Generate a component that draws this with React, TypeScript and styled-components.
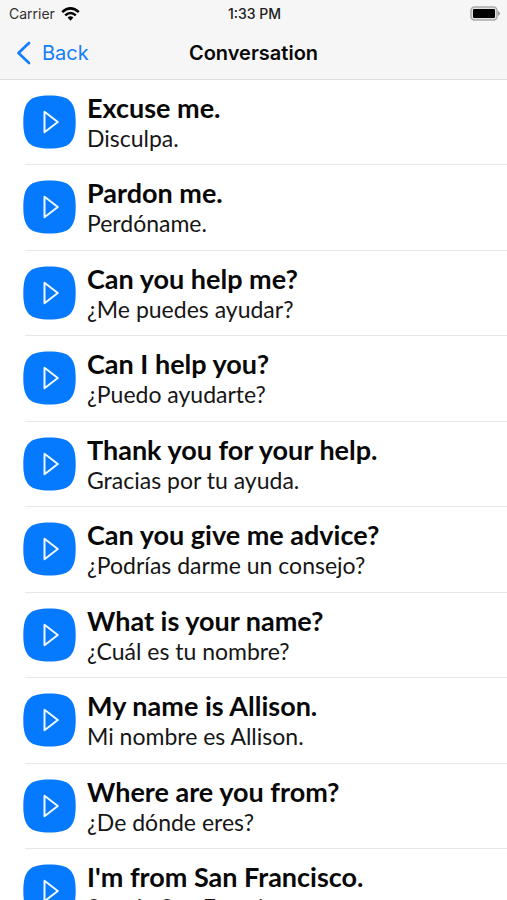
import React from "react";
import styled, { createGlobalStyle } from "styled-components";

const GlobalStyle = createGlobalStyle`
  * { box-sizing: border-box; }
  body { margin: 0; background: #fff; overflow: hidden; }
`;

const Screen = styled.div`
  height: 100vh;
  display: flex;
  flex-direction: column;
  overflow: hidden;
  color: #080808;
  font-family: Inter, "Liberation Sans", sans-serif;
`;

const Header = styled.header`
  flex: none;
  background: #f6f6f6;
  border-bottom: 1px solid #dedede;
`;

const StatusBar = styled.div`
  display: grid;
  grid-template-columns: 1fr auto 1fr;
  align-items: center;
  height: 27px;
  padding: 0 7px 0 9px;
  font-size: 14px;
  line-height: 20px;
`;

const Carrier = styled.div`
  display: flex;
  align-items: center;
  gap: 6px;
  color: #303030;
`;

const Time = styled.time`
  font-weight: 500;
  font-size: 14px;
  color: #202020;
`;

const Battery = styled.svg`
  display: block;
  justify-self: end;
`;

const NavBar = styled.nav`
  display: grid;
  grid-template-columns: 1fr auto 1fr;
  align-items: center;
  height: 52px;
  padding: 0 16px;
`;

const BackButton = styled.button`
  display: flex;
  align-items: center;
  justify-self: start;
  gap: 11px;
  padding: 0;
  border: 0;
  background: none;
  color: #147efb;
  font: 400 20px/24px Inter, "Liberation Sans", sans-serif;
  cursor: pointer;
`;

const Title = styled.h1`
  margin: 0;
  font-size: 20px;
  line-height: 24px;
  font-weight: 600;
`;

const PhraseList = styled.ul`
  display: grid;
  grid-auto-rows: 85px 86px;
  margin: 0;
  padding: 0 0 0 25px;
  list-style: none;
`;

const PhraseRow = styled.li`
  display: flex;
  gap: 11px;
  padding-top: 15px;
  border-bottom: 1px solid #e8e8e8;
`;

const PlayButton = styled.button`
  flex: none;
  width: 53px;
  height: 54px;
  margin-left: -2px;
  padding: 0;
  border: 0;
  background: none;
  cursor: pointer;
  svg { display: block; }
`;

const Phrase = styled.div`
  white-space: nowrap;
  font-family: Lato, sans-serif;
`;

const English = styled.p`
  margin: 0;
  font-size: 27px;
  line-height: 26px;
  font-weight: 700;
`;

const Spanish = styled.p`
  margin: 0;
  font-size: 23px;
  line-height: 34px;
  color: #161616;
`;

const phrases = [
  ["Excuse me.", "Disculpa."],
  ["Pardon me.", "Perdóname."],
  ["Can you help me?", "¿Me puedes ayudar?"],
  ["Can I help you?", "¿Puedo ayudarte?"],
  ["Thank you for your help.", "Gracias por tu ayuda."],
  ["Can you give me advice?", "¿Podrías darme un consejo?"],
  ["What is your name?", "¿Cuál es tu nombre?"],
  ["My name is Allison.", "Mi nombre es Allison."],
  ["Where are you from?", "¿De dónde eres?"],
  ["I'm from San Francisco.", "Soy de San Francisco."],
];

const WifiIcon = () => (
  <svg width="19" height="14" viewBox="0 0 19 14" fill="none" stroke="#000" strokeWidth="2.6" aria-hidden="true">
    <path d="M1.2 5.1 Q9.5 -2.3 17.8 5.1" />
    <path d="M4.2 8.4 Q9.5 3.6 14.8 8.4" />
    <path d="M6.6 10.6 Q9.5 8 12.4 10.6 L9.5 13.7Z" fill="#000" stroke="none" />
  </svg>
);

const BatteryIcon = () => (
  <Battery width="30" height="16" viewBox="0 0 30 16" role="img" aria-label="Battery full">
    <rect x="1" y="1" width="26" height="13" rx="3.5" fill="#e3e3e3" stroke="#aaa" strokeWidth="1.5" />
    <rect x="3" y="3" width="22" height="9" rx="1.3" fill="#000" />
    <path d="M28 5 Q30 6.2 30 7.5 Q30 8.8 28 10Z" fill="#999" />
  </Battery>
);

const PlayIcon = () => (
  <svg width="53" height="54" viewBox="0 0 53 54" aria-hidden="true">
    <path d="M26.5 .5 C46 .5 52.7 6 52.7 27 C52.7 48 46 53.5 26.5 53.5 C7 53.5 .3 48 .3 27 C.3 6 7 .5 26.5 .5Z" fill="#067aff" />
    <path d="M21.5 16.8 V37.2 L34.8 27Z" fill="none" stroke="#f2f8ff" strokeWidth="2" strokeLinejoin="round" />
  </svg>
);

export default function App() {
  return (
    <Screen>
      <GlobalStyle />
      <Header>
        <StatusBar>
          <Carrier>Carrier <WifiIcon /></Carrier>
          <Time>1:33 PM</Time>
          <BatteryIcon />
        </StatusBar>
        <NavBar>
          <BackButton type="button">
            <svg width="15" height="24" viewBox="0 0 15 24" fill="none" stroke="currentColor" strokeWidth="2.7" strokeLinecap="round" strokeLinejoin="round" aria-hidden="true">
              <path d="M13 2 L2.5 12 L13 22" />
            </svg>
            Back
          </BackButton>
          <Title>Conversation</Title>
        </NavBar>
      </Header>
      <PhraseList>
        {phrases.map(([english, spanish]) => (
          <PhraseRow key={english}>
            <PlayButton type="button" aria-label={`Play: ${english}`}>
              <PlayIcon />
            </PlayButton>
            <Phrase>
              <English lang="en">{english}</English>
              <Spanish lang="es">{spanish}</Spanish>
            </Phrase>
          </PhraseRow>
        ))}
      </PhraseList>
    </Screen>
  );
}
